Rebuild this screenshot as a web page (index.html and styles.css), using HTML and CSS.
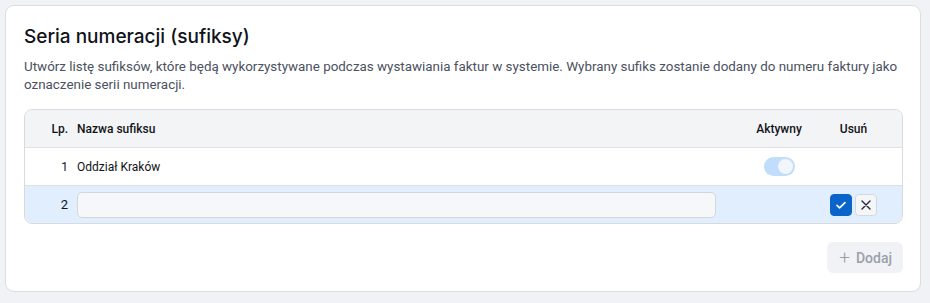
FILE: index.html
```html
<!DOCTYPE html>
<html lang="pl">
<head>
    <meta charset="UTF-8">
    <meta name="viewport" content="width=device-width, initial-scale=1.0">
    <title>Seria numeracji</title>
    <link rel="stylesheet" href="styles.css">
</head>
<body>
    <div class="card">
        <h2 class="card-title">Seria numeracji (sufiksy)</h2>
        <p class="card-desc">Utwórz listę sufiksów, które będą wykorzystywane podczas wystawiania faktur w systemie. Wybrany sufiks zostanie dodany do numeru faktury jako oznaczenie serii numeracji.</p>
        <div class="table">
            <div class="row head">
                <div class="col-lp">Lp.</div>
                <div class="col-name">Nazwa sufiksu</div>
                <div class="col-active">Aktywny</div>
                <div class="col-del">Usuń</div>
            </div>
            <div class="row">
                <div class="col-lp">1</div>
                <div class="col-name">Oddział Kraków</div>
                <div class="col-active"><span class="toggle"><span class="knob"></span></span></div>
                <div class="col-del"></div>
            </div>
            <div class="row editing">
                <div class="col-lp">2</div>
                <div class="col-name"><input type="text" class="name-input"></div>
                <div class="col-active"></div>
                <div class="col-del">
                    <button class="icon-btn confirm">
                        <svg width="12" height="12" viewBox="0 0 12 12"><path d="M2 6.3l2.6 2.5L10 3.6" fill="none" stroke="#fff" stroke-width="1.6" stroke-linecap="round" stroke-linejoin="round"/></svg>
                    </button>
                    <button class="icon-btn cancel">
                        <svg width="12" height="12" viewBox="0 0 12 12"><path d="M2 2l8 8M10 2l-8 8" fill="none" stroke="#1f2937" stroke-width="1.4" stroke-linecap="round"/></svg>
                    </button>
                </div>
            </div>
        </div>
        <div class="actions">
            <button class="add-button"><span class="plus">+</span> Dodaj</button>
        </div>
    </div>
</body>
</html>
```

FILE: styles.css
```css
body {
    font-family: Roboto, Arial, sans-serif;
    margin: 0;
    padding: 5px 9px 11px 5px;
    background-color: #f1f2f5;
    box-sizing: border-box;
}
.card {
    background: white;
    border: 1px solid #dcdde1;
    border-radius: 9px;
    padding: 18px 17px 18px 18px;
    height: 287px;
    box-sizing: border-box;
}
.card-title {
    font-family: Inter, "Open Sans", sans-serif;
    font-weight: 500;
    font-size: 19px;
    color: #111318;
    margin: 0 0 8px;
    line-height: 26px;
}
.card-desc {
    font-size: 13.4px;
    line-height: 18px;
    color: #4b5160;
    margin: 0 0 15px;
}
.table {
    border: 1px solid #d8dadf;
    border-radius: 8px;
    overflow: hidden;
}
.row {
    display: flex;
    align-items: center;
    height: 37px;
    font-size: 12px;
    color: #111318;
    border-top: 1px solid #dfe1e5;
}
.row.head {
    border-top: none;
    height: 37px;
    background: #f3f4f6;
    font-weight: 500;
}
.row.editing {
    background: #e0eefd;
}
.col-lp {
    width: 43px;
    text-align: right;
    padding-right: 9px;
    flex-shrink: 0;
    font-size: 12px;
}
.editing .col-lp {
    font-size: 13px;
}
.col-name {
    flex: 1;
}
.col-active {
    width: 80px;
    display: flex;
    justify-content: center;
    flex-shrink: 0;
}
.col-del {
    width: 83px;
    display: flex;
    justify-content: center;
    gap: 3px;
    flex-shrink: 0;
    padding-right: 14px;
    box-sizing: border-box;
}
.name-input {
    width: 639px;
    height: 26px;
    border: 1px solid #d4d6db;
    border-radius: 5px;
    background: #f6f7f9;
    box-sizing: border-box;
    display: block;
}
.toggle {
    display: block;
    width: 31px;
    height: 19px;
    border-radius: 10px;
    background: #c0ddfb;
    position: relative;
}
.knob {
    position: absolute;
    right: 2px;
    top: 2px;
    width: 15px;
    height: 15px;
    border-radius: 50%;
    background: #f2f5f9;
}
.icon-btn {
    width: 22px;
    height: 22px;
    border-radius: 4px;
    padding: 0;
    display: flex;
    align-items: center;
    justify-content: center;
    cursor: pointer;
}
.confirm {
    background: #0b64c9;
    border: 1px solid #0b64c9;
}
.cancel {
    background: #f5f6f8;
    border: 1px solid #d6d8dd;
}
.actions {
    display: flex;
    justify-content: flex-end;
    margin-top: 18px;
}
.add-button {
    font-family: Roboto, Arial, sans-serif;
    background: #f1f2f5;
    color: #9aa0ab;
    border: none;
    border-radius: 6px;
    font-size: 14px;
    font-weight: 500;
    height: 31px;
    padding: 0 11px 0 12px;
    display: flex;
    align-items: center;
    gap: 6px;
}
.plus {
    font-size: 19px;
    font-weight: 300;
    line-height: 1;
}
```
